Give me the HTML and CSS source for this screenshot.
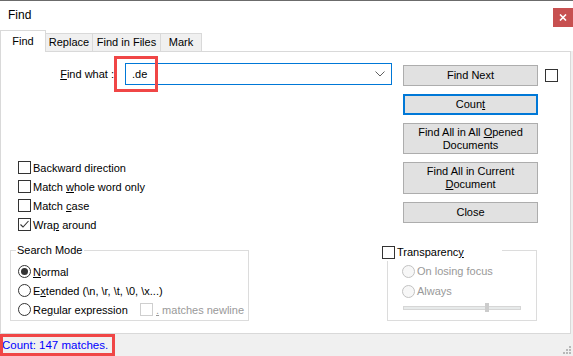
FILE: index.html
```html
<!DOCTYPE html>
<html lang="en">
<head>
    <meta charset="UTF-8">
    <title>Find</title>
    <link rel="stylesheet" href="styles.css">
</head>
<body>

<div class="window">
    <div class="titlebar">
        <span class="title">Find</span>
        <span class="close">
            <svg width="8" height="7" viewBox="0 0 8 7"><path d="M1 0.5 L7 6.5 M7 0.5 L1 6.5" stroke="#fff" stroke-width="1.6" fill="none"/></svg>
        </span>
    </div>

    <div class="tabs">
        <div class="tab tab-active w-find">Find</div>
        <div class="tab w-replace">Replace</div>
        <div class="tab w-files">Find in Files</div>
        <div class="tab w-mark">Mark</div>
    </div>

    <div class="main">
        <div class="panel">
            <div class="top">
                <div class="left">
                    <!-- search text -->
                    <div class="find-row">
                        <span class="find-label"><u>F</u>ind what :</span>
                        <div class="combo">
                            <span>.de</span>
                            <svg width="10" height="6" viewBox="0 0 10 6"><polyline points="0.5,0.5 5,5 9.5,0.5" stroke="#606060" fill="none"/></svg>
                        </div>
                    </div>

                    <div class="options">
                        <div class="check"><span class="box"></span><span class="txt">Backward direction</span></div>
                        <div class="check"><span class="box"></span><span class="txt">Match <u>w</u>hole word only</span></div>
                        <div class="check"><span class="box"></span><span class="txt">Match <u>c</u>ase</span></div>
                        <div class="check">
                            <span class="box">
                                <svg width="11" height="11" viewBox="0 0 11 11"><polyline points="1.5,5.5 4,8 9.5,2" stroke="#333" stroke-width="1.1" fill="none"/></svg>
                            </span>
                            <span class="txt">Wra<u>p</u> around</span>
                        </div>
                    </div>
                </div>

                <div class="actions">
                    <div class="btn-row">
                        <button class="btn">Find Next</button>
                        <span class="box"></span>
                    </div>
                    <button class="btn btn-focus">Coun<u>t</u></button>
                    <button class="btn btn-tall">Find All in All <u>O</u>pened<br>Documents</button>
                    <button class="btn btn-tall btn-taller">Find All in Current<br><u>D</u>ocument</button>
                    <button class="btn">Close</button>
                </div>
            </div>

            <div class="bottom">
                <div class="group-search">
                    <div class="group-head">
                        <span class="line-l"></span>
                        <span class="head-label">Search Mode</span>
                        <span class="line-r"></span>
                    </div>
                    <div class="group-body search-body">
                        <div class="radio-row"><span class="radio radio-on"></span><span class="txt"><u>N</u>ormal</span></div>
                        <div class="radio-row"><span class="radio"></span><span class="txt">E<u>x</u>tended (\n, \r, \t, \0, \x...)</span></div>
                        <div class="radio-row">
                            <span class="radio"></span>
                            <span class="txt regex-label">Re<u>g</u>ular expression</span>
                            <span class="box box-off"></span>
                            <span class="txt off newline"><u>.</u> matches newline</span>
                        </div>
                    </div>
                </div>

                <div class="group-trans">
                    <div class="trans-head">
                        <div class="check"><span class="box"></span><span class="txt">Transparenc<u>y</u></span></div>
                        <span class="trans-line"></span>
                    </div>
                    <div class="group-body trans-body">
                        <div class="radio-row tall"><span class="radio radio-off"></span><span class="txt off">On losing focus</span></div>
                        <div class="radio-row tall"><span class="radio radio-off"></span><span class="txt off">Always</span></div>
                        <div class="slider">
                            <span class="track"></span>
                            <span class="thumb"></span>
                        </div>
                    </div>
                </div>
            </div>
        </div>
    </div>

    <div class="status">
        <span>Count: 147 matches.</span>
        <svg class="grip" width="9" height="9" viewBox="0 0 9 9" fill="#b8b8b8">
            <rect x="6" y="0" width="2" height="2"/>
            <rect x="3" y="3" width="2" height="2"/><rect x="6" y="3" width="2" height="2"/>
            <rect x="0" y="6" width="2" height="2"/><rect x="3" y="6" width="2" height="2"/><rect x="6" y="6" width="2" height="2"/>
        </svg>
    </div>

    <!-- annotation boxes -->
    <span class="mark mark-find"></span>
    <span class="mark mark-status"></span>
</div>

</body>
</html>
```

FILE: styles.css
```css
* {
    box-sizing: border-box;
}
body {
    margin: 0;
    font-family: "Liberation Sans", Arial, sans-serif;
    font-size: 11px;
    color: #000;
    background-color: #fff;
}
u {
    text-underline-offset: 1px;
}
.window {
    position: relative;
    width: 573px;
    height: 356px;
    overflow: hidden;
    background-color: #fff;
}

/* title bar */
.titlebar {
    display: flex;
    height: 30px;
    border-top: 1px solid #6b6b6b;
}
.title {
    font-size: 12px;
    line-height: 29px;
    padding-left: 8px;
}
.close {
    display: flex;
    align-items: center;
    justify-content: center;
    width: 20px;
    height: 19px;
    margin-top: 7px;
    margin-left: auto;
    background-color: #c75050;
}

/* tabs */
.tabs {
    display: flex;
    align-items: flex-end;
    height: 21px;
}
.tab {
    height: 18px;
    line-height: 17px;
    text-align: center;
    background-color: #f0f0f0;
    border-top: 1px solid #d9d9d9;
    border-right: 1px solid #d9d9d9;
}
.tab-active {
    position: relative;
    z-index: 1;
    height: 22px;
    line-height: 20px;
    margin-bottom: -1px;
    background-color: #fff;
    border-left: 1px solid #d9d9d9;
}
.w-find { width: 46px; }
.w-replace { width: 47px; }
.w-files { width: 68px; }
.w-mark { width: 41px; }

.main {
    display: flex;
    background-color: #f0f0f0;
}
.panel {
    width: 571px;
    height: 283px;
    border: 1px solid #d9d9d9;
    background-color: #fff;
}
.top {
    display: flex;
}
.left {
    width: 402px;
}
.find-row {
    display: flex;
    align-items: center;
    height: 22px;
    margin-top: 11px;
}
.find-label {
    width: 113px;
    margin-right: 11px;
    text-align: right;
}
.combo {
    display: flex;
    align-items: center;
    justify-content: space-between;
    width: 267px;
    height: 22px;
    padding: 0 6px 0 6px;
    border: 1px solid #0078d7;
}
.options {
    margin-top: 73px;
    padding-left: 17px;
}
.check {
    display: flex;
    align-items: center;
    gap: 2px;
    height: 19px;
}
.txt {
    white-space: nowrap;
}
.box {
    display: flex;
    align-items: center;
    justify-content: center;
    flex-shrink: 0;
    width: 13px;
    height: 13px;
    border: 1px solid #333;
    background-color: #fff;
}
.box-off {
    border-color: #cfcfcf;
}
.off {
    color: #999;
}

/* buttons on the right */
.actions {
    display: flex;
    flex-direction: column;
    gap: 8px;
    margin-top: 13px;
}
.btn-row {
    display: flex;
    align-items: center;
    gap: 7px;
}
.btn {
    width: 135px;
    height: 21px;
    padding: 0;
    font-family: inherit;
    font-size: 11px;
    line-height: 13px;
    color: #000;
    background-color: #e1e1e1;
    border: 1px solid #adadad;
}
.btn-focus {
    border: 2px solid #0078d7;
}
.btn-tall {
    height: 31px;
}
.btn-taller {
    height: 32px;
}

/* group boxes */
.bottom {
    display: flex;
    align-items: flex-start;
    margin-top: 9px;
}
.group-search {
    width: 239px;
    margin-left: 9px;
}
.group-head {
    display: flex;
    align-items: center;
    height: 14px;
}
.line-l {
    align-self: flex-end;
    width: 6px;
    height: 7px;
    border-top: 1px solid #dcdcdc;
    border-left: 1px solid #dcdcdc;
}
.head-label {
    padding: 0 2px 0 1px;
}
.line-r {
    align-self: flex-end;
    flex: 1;
    height: 7px;
    border-top: 1px solid #dcdcdc;
    border-right: 1px solid #dcdcdc;
}
.group-body {
    border: 1px solid #dcdcdc;
    border-top: none;
}
.search-body {
    height: 64px;
    padding: 5px 0 0 7px;
}
.radio-row {
    display: flex;
    align-items: center;
    gap: 2px;
    height: 19px;
}
.radio-row.tall {
    height: 20px;
}
.radio {
    display: flex;
    align-items: center;
    justify-content: center;
    flex-shrink: 0;
    width: 13px;
    height: 13px;
    border: 1px solid #333;
    border-radius: 50%;
    background-color: #fff;
}
.radio-on::after {
    content: "";
    width: 7px;
    height: 7px;
    border-radius: 50%;
    background-color: #333;
}
.radio-off {
    border-color: #c2c2c2;
    background-color: #f7f7f7;
}
.regex-label {
    width: 105px;
}
.newline {
    margin-left: 1px;
}

.group-trans {
    width: 155px;
    margin-left: 133px;
}
.trans-head {
    display: flex;
    align-items: center;
    height: 18px;
}
.trans-line {
    align-self: flex-end;
    flex: 1;
    height: 11px;
    margin-left: 38px;
    border-top: 1px solid #dcdcdc;
    border-right: 1px solid #dcdcdc;
}
.trans-body {
    height: 60px;
    margin-left: 5px;
    padding-left: 14px;
}
.slider {
    position: relative;
    width: 118px;
    height: 12px;
    margin-left: 1px;
    padding-top: 5px;
}
.track {
    display: block;
    height: 4px;
    background-color: #e7eaea;
    border: 1px solid #d6d6d6;
}
.thumb {
    position: absolute;
    left: 82px;
    top: 2px;
    width: 4px;
    height: 9px;
    background-color: #cccccc;
}

/* status bar */
.status {
    display: flex;
    align-items: center;
    justify-content: space-between;
    height: 22px;
    padding-left: 2px;
    font-size: 11.5px;
    color: #0000ff;
    background-color: #f0f0f0;
}
.grip {
    align-self: flex-end;
    margin: 0 1px 1px 0;
}

/* red annotation boxes */
.mark {
    position: absolute;
    border: 3px solid #f04646;
}
.mark-find {
    left: 114px;
    top: 56px;
    width: 44px;
    height: 36px;
}
.mark-status {
    left: 0;
    top: 334px;
    width: 115px;
    height: 22px;
}
```
